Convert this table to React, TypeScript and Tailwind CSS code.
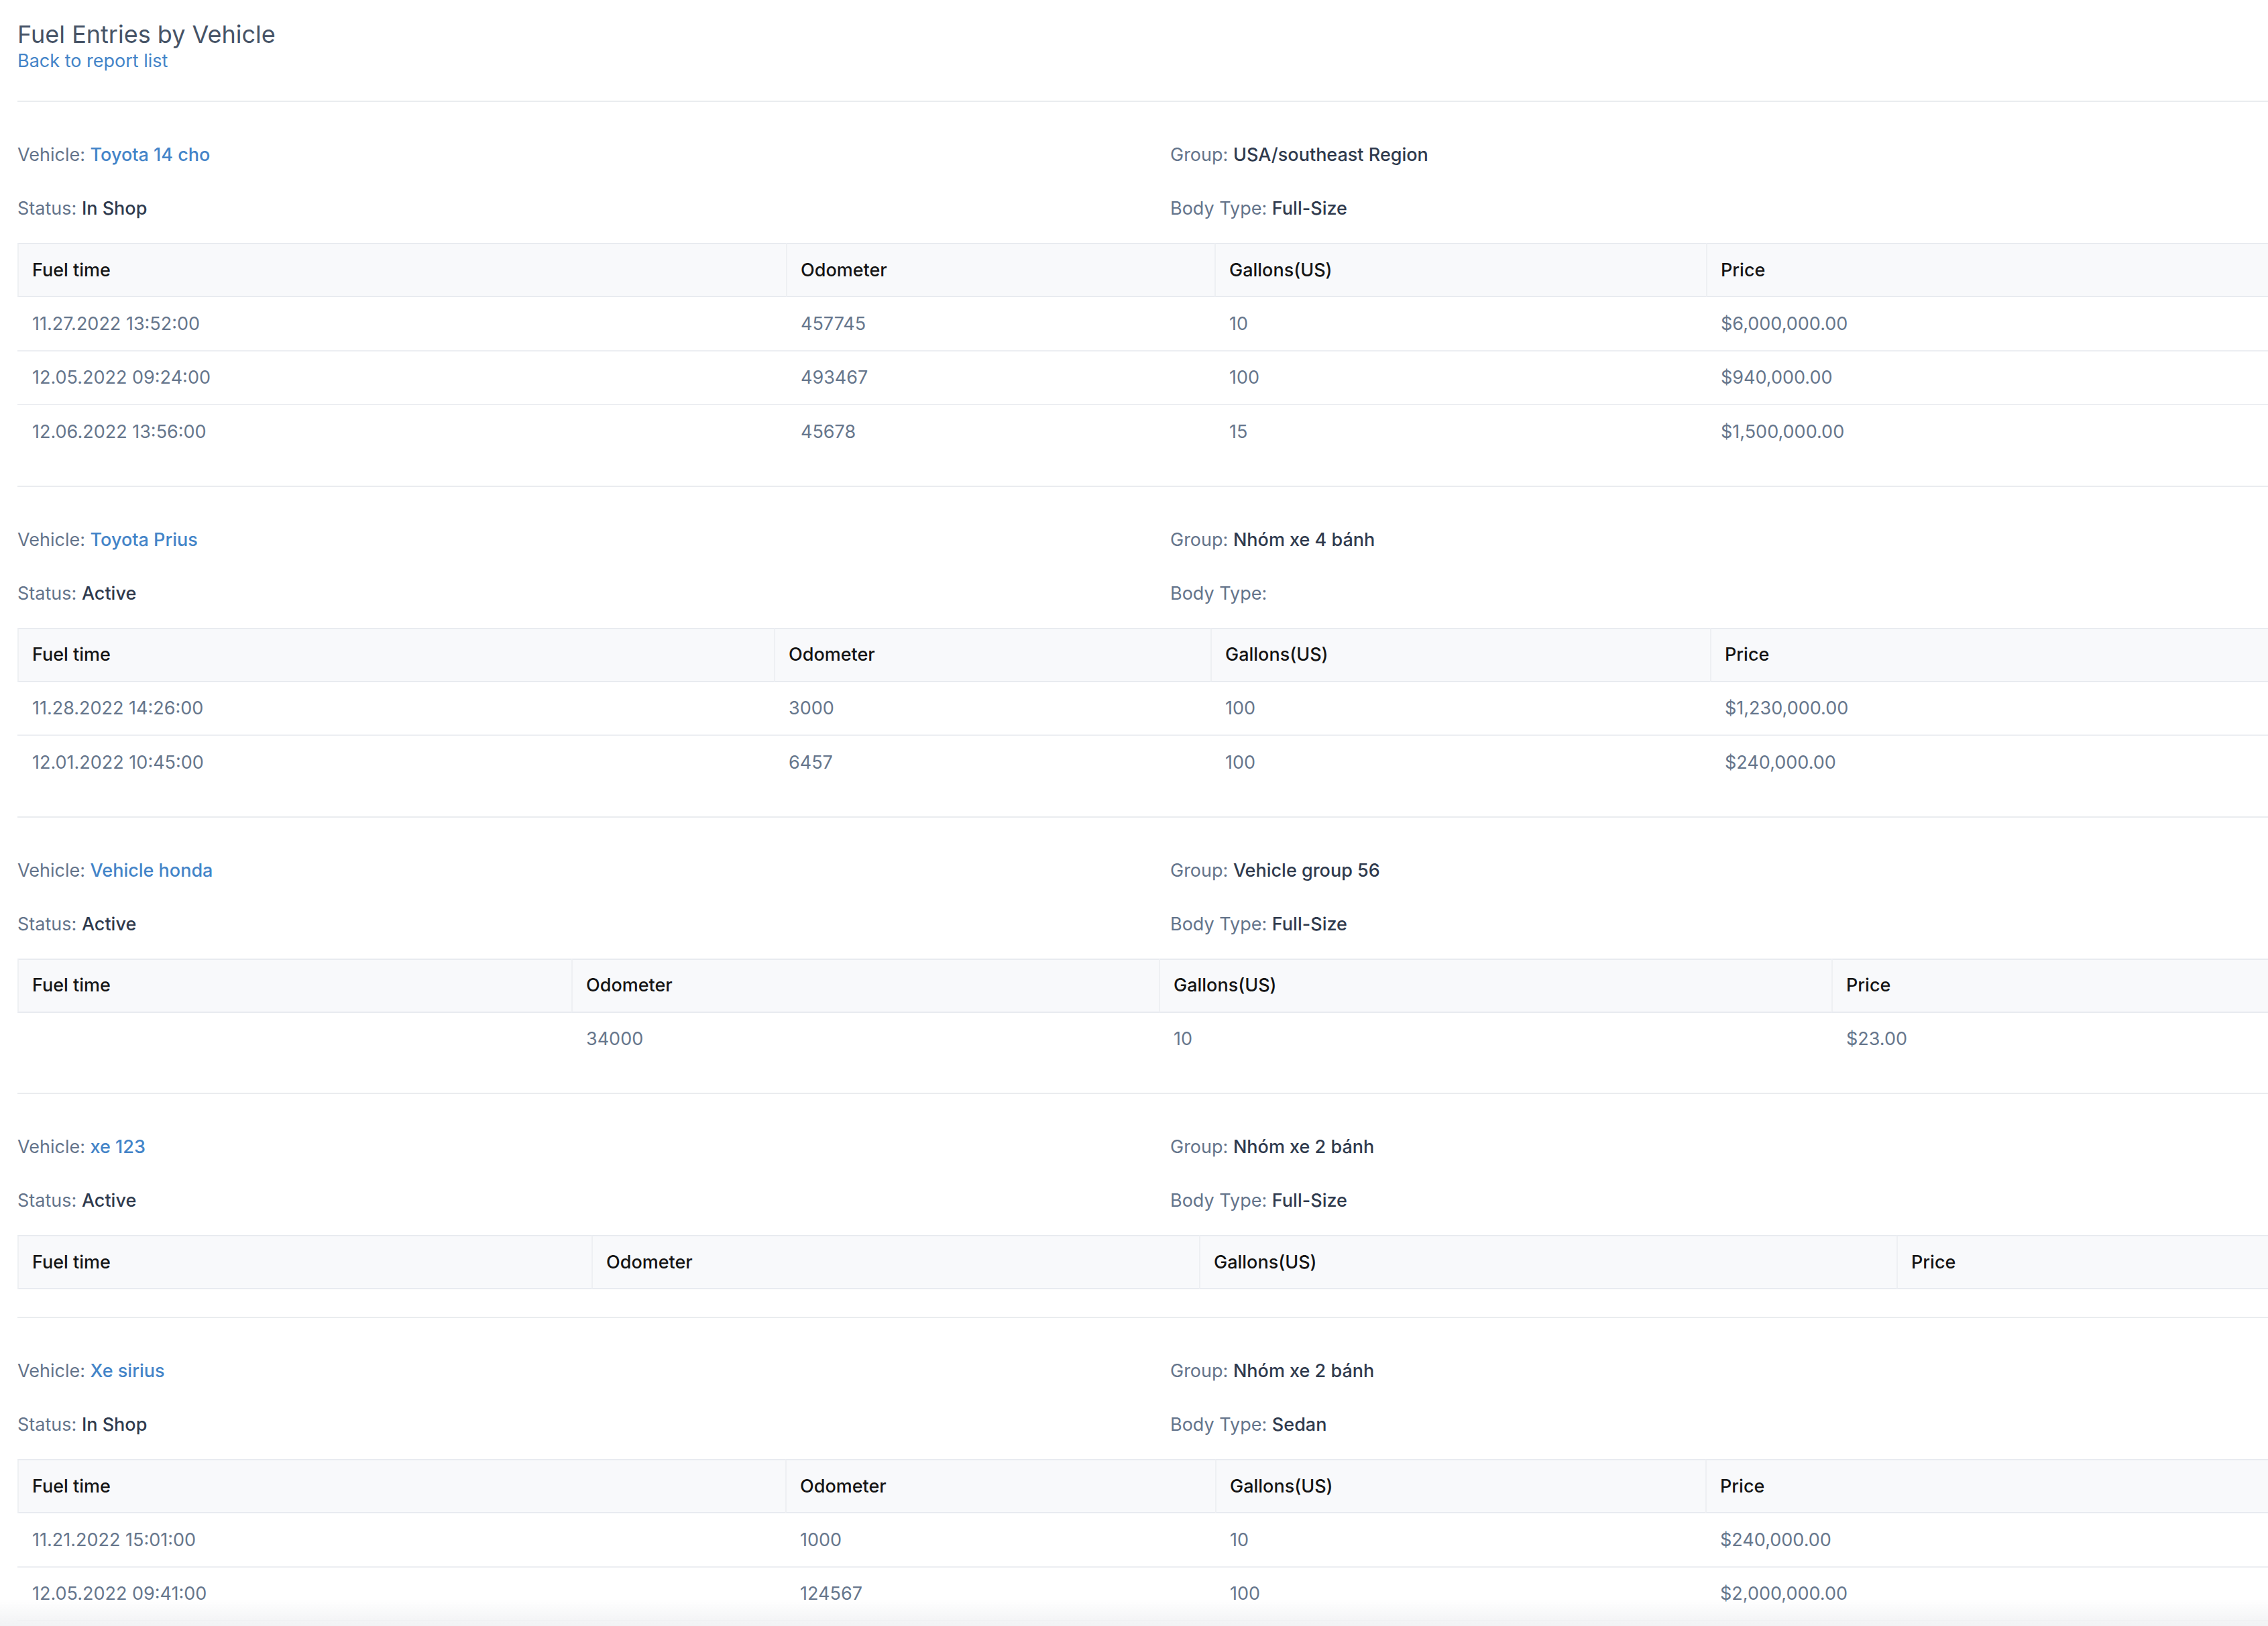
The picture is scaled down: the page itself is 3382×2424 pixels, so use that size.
type Entry = { time: string; odometer: string; gallons: string; price: string }

type VehicleReport = {
  vehicle: string
  group: string
  status: string
  bodyType: string
  cols: [number, number, number]
  entries: Entry[]
}

const reports: VehicleReport[] = [
  {
    vehicle: 'Toyota 14 cho',
    group: 'USA/southeast Region',
    status: 'In Shop',
    bodyType: 'Full-Size',
    cols: [1146, 639, 733],
    entries: [
      { time: '11.27.2022 13:52:00', odometer: '457745', gallons: '10', price: '$6,000,000.00' },
      { time: '12.05.2022 09:24:00', odometer: '493467', gallons: '100', price: '$940,000.00' },
      { time: '12.06.2022 13:56:00', odometer: '45678', gallons: '15', price: '$1,500,000.00' },
    ],
  },
  {
    vehicle: 'Toyota Prius',
    group: 'Nhóm xe 4 bánh',
    status: 'Active',
    bodyType: '',
    cols: [1128, 651, 745],
    entries: [
      { time: '11.28.2022 14:26:00', odometer: '3000', gallons: '100', price: '$1,230,000.00' },
      { time: '12.01.2022 10:45:00', odometer: '6457', gallons: '100', price: '$240,000.00' },
    ],
  },
  {
    vehicle: 'Vehicle honda',
    group: 'Vehicle group 56',
    status: 'Active',
    bodyType: 'Full-Size',
    cols: [826, 876, 1003],
    entries: [{ time: '', odometer: '34000', gallons: '10', price: '$23.00' }],
  },
  {
    vehicle: 'xe 123',
    group: 'Nhóm xe 2 bánh',
    status: 'Active',
    bodyType: 'Full-Size',
    cols: [856, 906, 1040],
    entries: [],
  },
  {
    vehicle: 'Xe sirius',
    group: 'Nhóm xe 2 bánh',
    status: 'In Shop',
    bodyType: 'Sedan',
    cols: [1145, 641, 731],
    entries: [
      { time: '11.21.2022 15:01:00', odometer: '1000', gallons: '10', price: '$240,000.00' },
      { time: '12.05.2022 09:41:00', odometer: '124567', gallons: '100', price: '$2,000,000.00' },
      { time: '12.07.2022 08:12:00', odometer: '124890', gallons: '20', price: '$400,000.00' },
    ],
  },
]

function Info({ label, children }: { label: string; children: React.ReactNode }) {
  return (
    <div className="text-[27px] leading-[40px] text-[#64748b]">
      {label}: {children}
    </div>
  )
}

function ReportSection({ report }: { report: VehicleReport }) {
  const headers = ['Fuel time', 'Odometer', 'Gallons(US)', 'Price']
  return (
    <section className="border-b-2 border-[#eaecef] pt-[59px] pb-[41px]">
      <div className="grid grid-cols-2 gap-y-[40px]">
        <Info label="Vehicle">
          <a href="#" className="font-medium text-[#4384c8]">{report.vehicle}</a>
        </Info>
        <Info label="Group">
          <span className="font-medium text-[#2f3a4d]">{report.group}</span>
        </Info>
        <Info label="Status">
          <span className="font-medium text-[#2f3a4d]">{report.status}</span>
        </Info>
        <Info label="Body Type">
          <span className="font-medium text-[#2f3a4d]">{report.bodyType}</span>
        </Info>
      </div>

      <table className="mt-[31px] w-full table-fixed border-separate border-spacing-0 text-left text-[27px] leading-[40px]">
        <colgroup>
          <col style={{ width: report.cols[0] }} />
          <col style={{ width: report.cols[1] }} />
          <col style={{ width: report.cols[2] }} />
          <col />
        </colgroup>
        <thead>
          <tr className="bg-[#f8f9fb]">
            {headers.map((h) => (
              <th
                key={h}
                className="border-y-2 border-l-2 border-y-[#e8ebf0] border-l-[#eef0f3] px-[20px] py-[18.5px] font-medium text-[#141414]"
              >
                {h}
              </th>
            ))}
          </tr>
        </thead>
        <tbody>
          {report.entries.map((e, i) => {
            const last = i === report.entries.length - 1
            const cell = `pl-[22px] pr-[20px] pt-[19.5px] pb-[19px] text-[#66768c] ${
              last ? '' : 'border-b-2 border-[#eceef2]'
            }`
            return (
              <tr key={i}>
                <td className={cell}>{e.time}</td>
                <td className={cell}>{e.odometer}</td>
                <td className={cell}>{e.gallons}</td>
                <td className={cell}>{e.price}</td>
              </tr>
            )
          })}
        </tbody>
      </table>
    </section>
  )
}

export default function App() {
  return (
    <main className="min-h-screen w-full overflow-hidden bg-white [font-family:Inter,'Noto_Sans',sans-serif]">
      <div className="w-[3464px] pl-[26px]">
        {/* tiêu đề */}
        <header className="border-b-2 border-[#eaecef] pt-[29px] pb-[41px]">
          <h1 className="text-[36px] leading-[44px] font-normal text-[#465366]">Fuel Entries by Vehicle</h1>
          <a href="#" className="block text-[27px] leading-[36px] text-[#4384c8]">
            Back to report list
          </a>
        </header>

        {reports.map((r) => (
          <ReportSection key={r.vehicle} report={r} />
        ))}
      </div>

      {/* bóng của thanh dưới cố định */}
      <div className="pointer-events-none fixed inset-x-0 bottom-0 h-[40px] bg-gradient-to-t from-[#f1f2f4] to-transparent" />
    </main>
  )
}
